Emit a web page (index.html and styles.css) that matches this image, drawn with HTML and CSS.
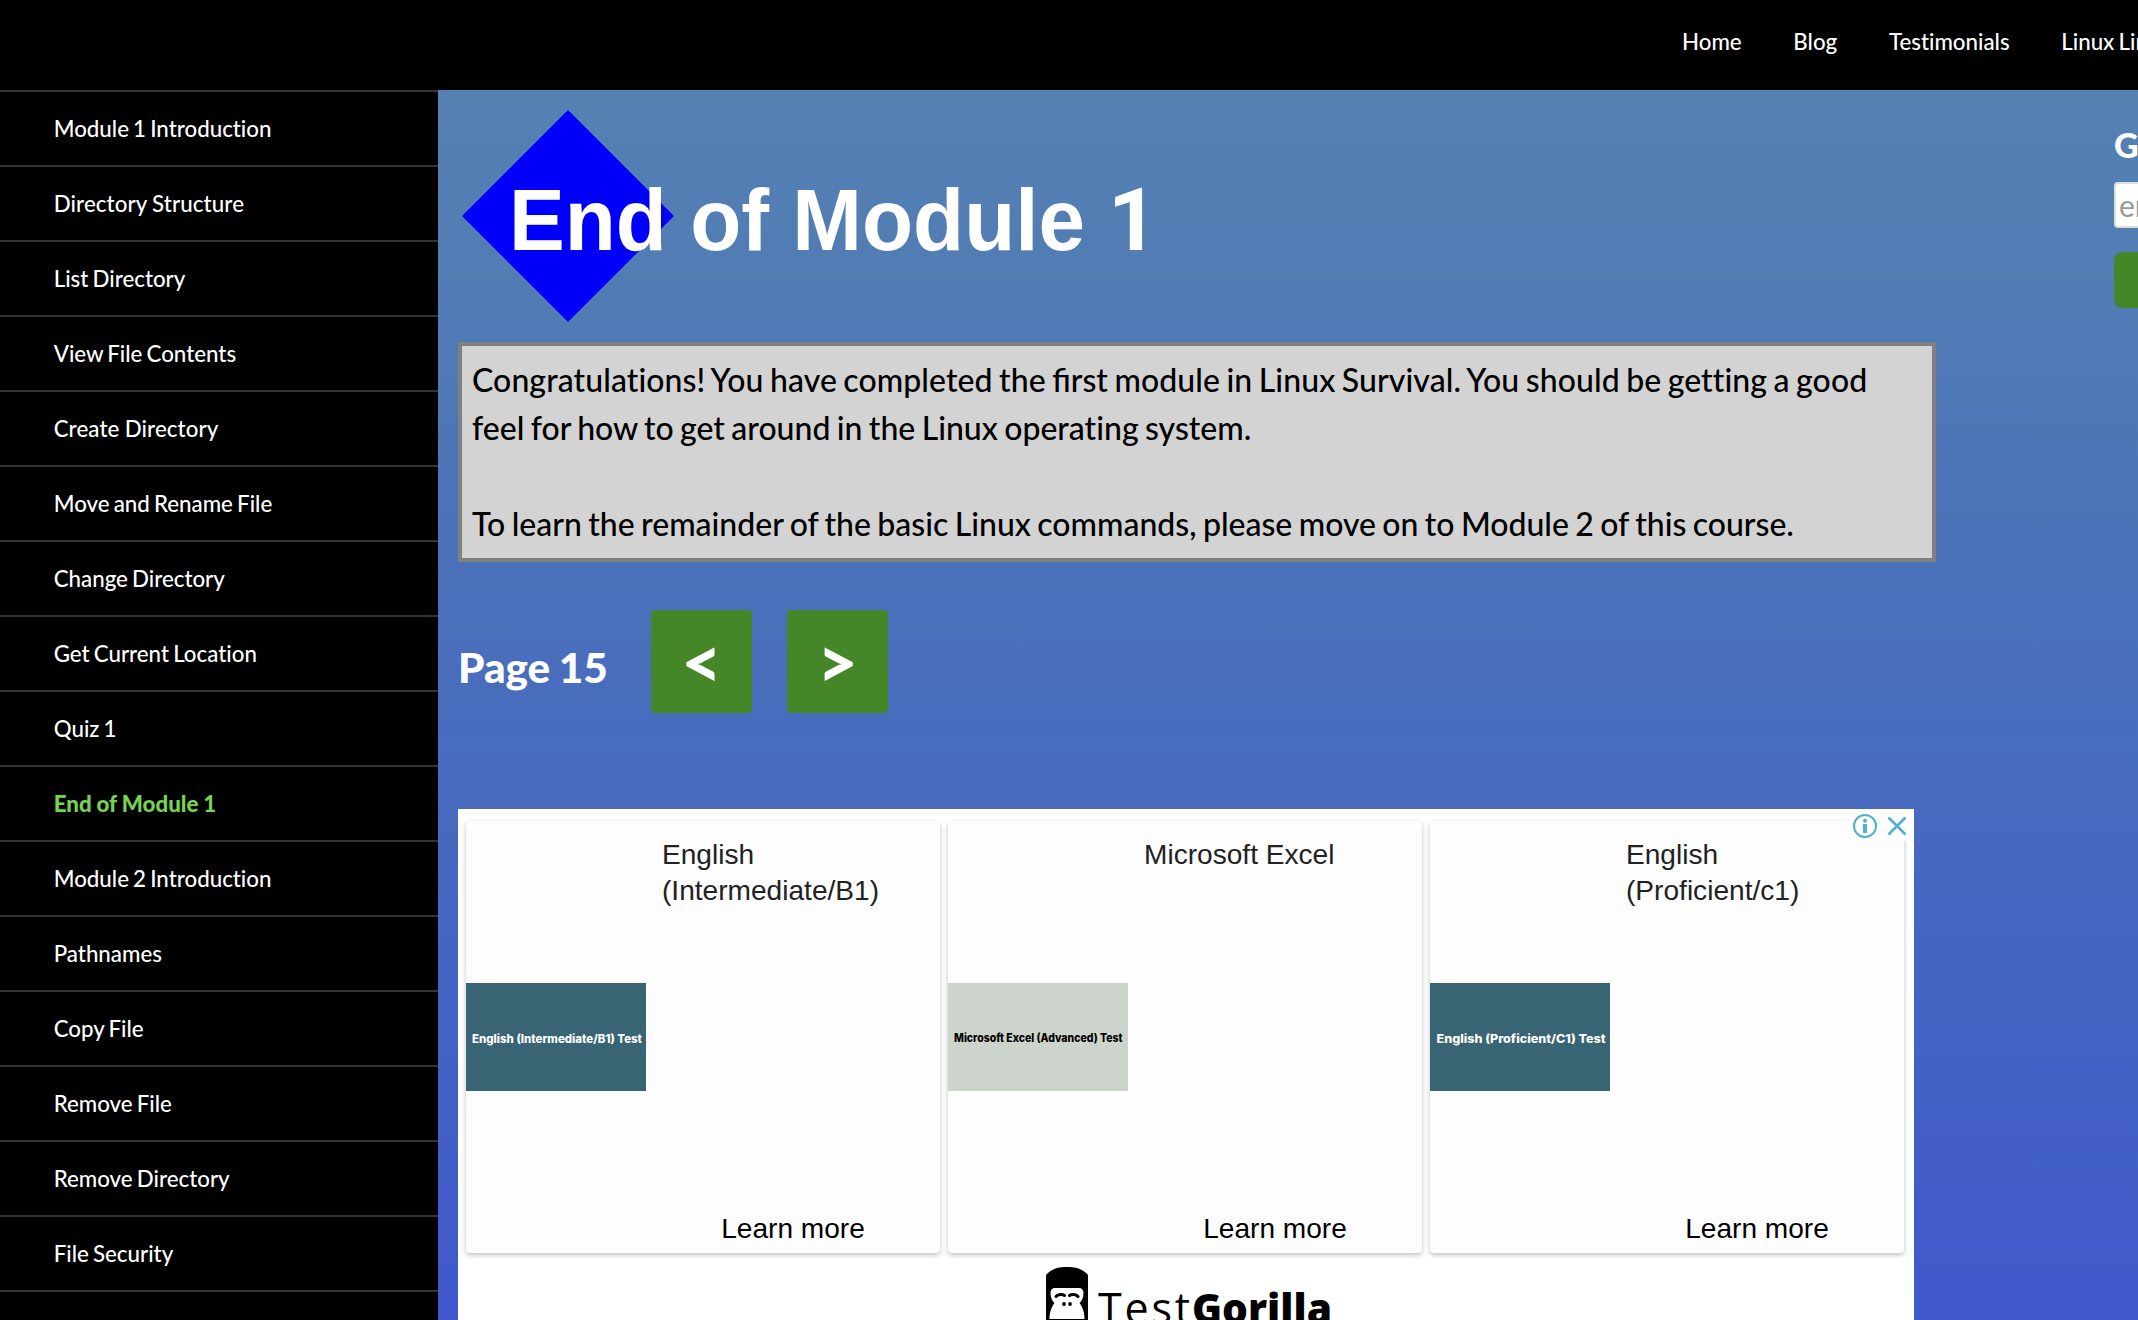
FILE: index.html
```html
<!DOCTYPE html>
<html lang="en">
<head>
<meta charset="utf-8">
<title>Linux Survival</title>
<link rel="stylesheet" href="styles.css">
</head>
<body>
<header class="topbar">
  <nav class="topnav">
    <a>Home</a><a>Blog</a><a>Testimonials</a><a>Linux Links</a>
  </nav>
</header>
<div class="layout">
  <aside class="sidebar">
    <ul class="menu">
      <li>Module 1 Introduction</li>
      <li class="loose">Directory Structure</li>
      <li>List Directory</li>
      <li>View File Contents</li>
      <li class="loose">Create Directory</li>
      <li>Move and Rename File</li>
      <li>Change Directory</li>
      <li>Get Current Location</li>
      <li>Quiz 1</li>
      <li class="active">End of Module 1</li>
      <li>Module 2 Introduction</li>
      <li>Pathnames</li>
      <li>Copy File</li>
      <li>Remove File</li>
      <li>Remove Directory</li>
      <li>File Security</li>
      <li></li>
    </ul>
  </aside>
  <main class="content">
    <svg class="banner" width="720" height="252" viewBox="0 0 720 252" role="img">
      <path d="M110 20 L216 126 L110 232 L4 126 Z" fill="#0000fa"/>
      <text class="banner-text" x="51" y="160" textLength="576" lengthAdjust="spacingAndGlyphs">End of Module</text>
      <text class="banner-text banner-number" x="650" y="160">1</text>
    </svg>
    <div class="message">
      <p><span class="first-line">Congratulations! You have completed the <span class="liga">first</span> module in Linux Survival. You should be getting a good</span><br>feel for how to get around in the Linux operating system.</p>
      <p>To learn the remainder of the basic Linux commands, please move on to Module 2 of this course.</p>
    </div>
    <div class="pager">
      <span class="page-label">Page 15</span>
      <button class="step">&lt;</button>
      <button class="step">&gt;</button>
    </div>
    <section class="ad">
      <div class="ad-cards">
        <article class="card">
          <svg class="thumb dark" width="180" height="108"><text x="6" y="60" textLength="170" lengthAdjust="spacingAndGlyphs">English (Intermediate/B1) Test</text></svg>
          <div class="card-body"><h3>English<br>(Intermediate/B1)</h3><a>Learn more</a></div>
        </article>
        <article class="card">
          <svg class="thumb light" width="180" height="108"><text x="6" y="58.5" textLength="168.5" lengthAdjust="spacingAndGlyphs">Microsoft Excel (Advanced) Test</text></svg>
          <div class="card-body"><h3>Microsoft Excel</h3><a>Learn more</a></div>
        </article>
        <article class="card">
          <svg class="thumb dark" width="180" height="108"><text x="6.500" y="59.5" textLength="169" lengthAdjust="spacingAndGlyphs">English (Proficient/C1) Test</text></svg>
          <div class="card-body"><h3>English<br>(Proficient/c1)</h3><a>Learn more</a></div>
        </article>
      </div>
      <svg class="ad-choices" width="60" height="32" viewBox="0 0 60 32">
        <circle cx="15" cy="17" r="11" fill="none" stroke="#4fb0d0" stroke-width="2"/>
        <circle cx="15" cy="11.7" r="2" fill="#4fb0d0"/>
        <path d="M13 15h4v9h-4z" fill="#4fb0d0"/>
        <path d="M38.500 8.500l17 17M55.500 8.500l-17 17" stroke="#4fb0d0" stroke-width="2.600"/>
      </svg>
      <svg class="brand" width="300" height="60" viewBox="0 0 300 60">
        <path d="M0 60V8C5 2 12 0 21 0s16 2 21 8v52z" fill="#000"/>
        <path d="M9 21H33c3 0 4.500 2 4.500 5 0 4-1.500 8-4 10 3 4 5 9 5 16H3.500c0-7 2-12 5-16-2.500-2-4-6-4-10 0-3 1.500-5 4.500-5z" fill="#fff"/>
        <path d="M10 29.500c2-2.500 6.500-2.500 8.500-1M23.500 28.500c2-1.500 6.500-1.500 8.500 1" fill="none" stroke="#000" stroke-width="3" stroke-linecap="round"/>
        <circle cx="18" cy="37" r="1.900"/><circle cx="24" cy="37" r="1.900"/>
        <path d="M3 53c10-1.500 26-1.500 36 0v7H3z" fill="#000"/>
        <text class="brand-light" x="52" y="57" textLength="92" lengthAdjust="spacing">Test</text>
        <text class="brand-bold" x="146" y="57" textLength="140" lengthAdjust="spacingAndGlyphs">Gorilla</text>
      </svg>
    </section>
  </main>
  <aside class="signup">
    <h2>Get Linux tips</h2>
    <input type="text" placeholder="email address">
    <button class="subscribe"></button>
  </aside>
</div>
</body>
</html>
```
FILE: styles.css
```css
* { box-sizing: border-box; }

body {
  margin: 0;
  height: 1320px;
  overflow: hidden;
  background: #000;
  color: #fff;
  font-family: Lato, "Open Sans", sans-serif;
  font-size: 22.3px;
  font-weight: 500;
  font-variant-ligatures: none;
  word-spacing: -1.5px;
}

h2, h3, p, ul { margin: 0; padding: 0; }

.topbar { height: 90px; overflow: hidden; background: #000; }

.topnav {
  display: flex;
  gap: 51.7px;
  width: 2400px;
  padding-left: 1682px;
  line-height: 84px;
  white-space: nowrap;
}

.layout {
  display: flex;
  height: 1230px;
  overflow: hidden;
  background: linear-gradient(#5482b2 0%, #507ab5 20%, #4b70ba 40%, #476abf 58%, #4361c4 80%, #4058cc 100%);
}

.sidebar { flex: 0 0 438px; background: #000; }

.menu { list-style: none; }

.menu li {
  height: 75px;
  border-top: 2px solid #333;
  padding-left: 53.7px;
  line-height: 73px;
}

.menu .active { color: #77d353; font-weight: 900; word-spacing: -0.4px; }
.menu .loose { letter-spacing: 0.1px; word-spacing: -0.5px; }

.content { flex: 0 0 1498px; padding-left: 20px; }

.banner { display: block; }

.banner-text {
  fill: #fff;
  font: 700 88px "Liberation Sans", Arial, sans-serif;
  word-spacing: 0;
}

.banner-number { font: 700 87px Roboto, sans-serif; }

.message {
  width: 1478px;
  height: 220px;
  padding: 10px;
  border: 4px solid #808080;
  background: #d3d3d3;
  color: #000;
  font-size: 32px;
  font-weight: 500;
  line-height: 48px;
  white-space: nowrap;
  word-spacing: -1.7px;
}

.message p + p { margin-top: 48px; }
.first-line { letter-spacing: 0.08px; }
.liga { letter-spacing: 0; font-variant-ligatures: normal; }

.pager {
  display: flex;
  align-items: center;
  margin-top: 48px;
  height: 103px;
}

.page-label {
  width: 193px;
  padding-top: 11px;
  font-size: 42.3px;
  font-weight: 900;
  line-height: 50px;
  word-spacing: -1.5px;
}

.step {
  width: 101px;
  height: 103px;
  margin-right: 35px;
  padding: 0;
  border: 0;
  border-radius: 4px;
  background: #458728;
  color: #fff;
  font: 900 70px/103px Lato, sans-serif;
}

.ad {
  position: relative;
  width: 1456px;
  height: 600px;
  margin-top: 96px;
  padding: 12px 10px 0 8px;
  background: #fff;
  font-family: "Liberation Sans", Arial, sans-serif;
  word-spacing: 0;
}

.ad-cards { display: flex; gap: 8px; }

.card {
  display: flex;
  align-items: center;
  width: 474px;
  height: 432px;
  border-radius: 4px;
  background: #fdfdfd;
  box-shadow: 0 2px 5px rgba(0, 0, 0, 0.25);
}

.thumb { flex: 0 0 180px; }
.thumb text { font: 800 11.5px Inter, sans-serif; }
.dark { background: #396474; }
.dark text { fill: #fff; }
.light { background: #ccd4cb; }
.light text { fill: #000; }

.card-body {
  display: flex;
  flex: 1;
  flex-direction: column;
  justify-content: space-between;
  height: 432px;
  padding: 15.5px 0 6.5px;
}

.card-body h3,
.card-body a {
  font-size: 28.1px;
  font-weight: 400;
  line-height: 36px;
}

.card-body h3 { padding-left: 16px; color: #222; }
.card-body a { color: #000; text-align: center; }

.ad-choices {
  position: absolute;
  top: 0;
  right: 4px;
  background: #fff;
}

.brand { display: block; margin: 14px 0 0 580px; }
.brand-light { font: 400 43px "Open Sans", sans-serif; }
.brand-bold { font: 800 43px "Open Sans", sans-serif; }

.signup {
  flex: 0 0 320px;
  padding: 35px 0 0 178px;
  white-space: nowrap;
}

.signup h2 { font-size: 34px; font-weight: 900; line-height: 40px; }

.signup input {
  display: block;
  width: 300px;
  height: 46px;
  margin-top: 17px;
  padding: 0 3px;
  border: 2px solid #ddd;
  border-radius: 4px;
  background: #fff;
  font: 30px Lato, sans-serif;
}

.signup input::placeholder { color: #999; }

.subscribe {
  display: block;
  width: 300px;
  height: 56px;
  margin-top: 24px;
  border: 0;
  border-radius: 8px;
  background: #458728;
}
```
